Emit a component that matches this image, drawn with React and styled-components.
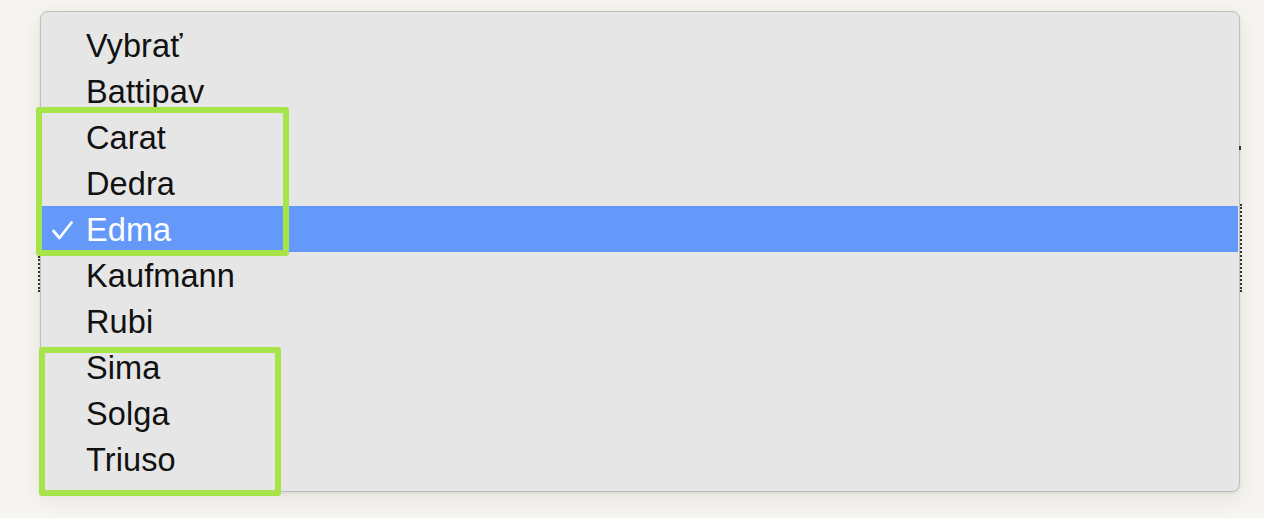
import React from 'react';
import styled, { createGlobalStyle } from 'styled-components';

const options = [
  'Vybrať',
  'Battipav',
  'Carat',
  'Dedra',
  'Edma',
  'Kaufmann',
  'Rubi',
  'Sima',
  'Solga',
  'Triuso',
];

const selected = 'Edma';

// annotation frames drawn over the menu
const marks = [
  { left: 36, top: 107, width: 253, height: 149 },
  { left: 39, top: 347, width: 242, height: 149 },
];

const GlobalStyle = createGlobalStyle`
  html, body {
    margin: 0;
    padding: 0;
    background: #f6f5f1;
  }
  body {
    font-family: "Liberation Sans", Arial, sans-serif;
  }
`;

const Page = styled.div`
  position: relative;
  width: 1264px;
  height: 518px;
  box-sizing: border-box;
  padding: 11px 24px 0 40px;
  overflow: hidden;
`;

const Menu = styled.ul`
  list-style: none;
  margin: 0;
  padding: 10px 1px 10px 0;
  width: 1200px;
  height: 481px;
  box-sizing: border-box;
  background: #e6e6e6;
  border: 1px solid #bdbdbd;
  border-radius: 8px;
  box-shadow: 0 6px 22px rgba(60, 50, 30, 0.1), 0 1px 3px rgba(0, 0, 0, 0.08);
`;

const Row = styled.li`
  display: flex;
  align-items: center;
  height: 46px;
  box-sizing: border-box;
  padding: 3px 0 0 11px;
  font-size: 32.5px;
  color: ${props => (props.active ? '#fff' : '#111')};
  background: ${props => (props.active ? '#6499f9' : 'transparent')};
`;

const Check = styled.span`
  display: flex;
  align-items: center;
  width: 34px;
  height: 100%;
`;

const Label = styled.span`
  letter-spacing: 0.1px;
`;

const Frame = styled.div`
  position: absolute;
  box-sizing: border-box;
  border: 6px solid #a6e44a;
  border-radius: 3px;
  pointer-events: none;
`;

const Dots = styled.div`
  position: absolute;
  width: 0;
  border-left: 2px dotted #333;
`;

function CheckMark() {
  return (
    <svg width="21" height="19" viewBox="0 0 21 19">
      <polyline
        points="1.5,10 7.5,17 19.5,1.5"
        fill="none"
        stroke="#fff"
        strokeWidth="2.7"
        strokeLinecap="round"
        strokeLinejoin="round"
      />
    </svg>
  );
}

export default function App() {
  return (
    <>
      <GlobalStyle />
      <Page>
        <Dots style={{ left: 1240, top: 204, height: 88 }} />
        <Dots style={{ left: 1239, top: 146, height: 4 }} />
        <Dots style={{ left: 38, top: 256, height: 36 }} />
        <Menu>
          {options.map(name => (
            <Row key={name} active={name === selected}>
              <Check>{name === selected ? <CheckMark /> : null}</Check>
              <Label>{name}</Label>
            </Row>
          ))}
        </Menu>
        {marks.map((m, i) => (
          <Frame key={i} style={m} />
        ))}
      </Page>
    </>
  );
}
